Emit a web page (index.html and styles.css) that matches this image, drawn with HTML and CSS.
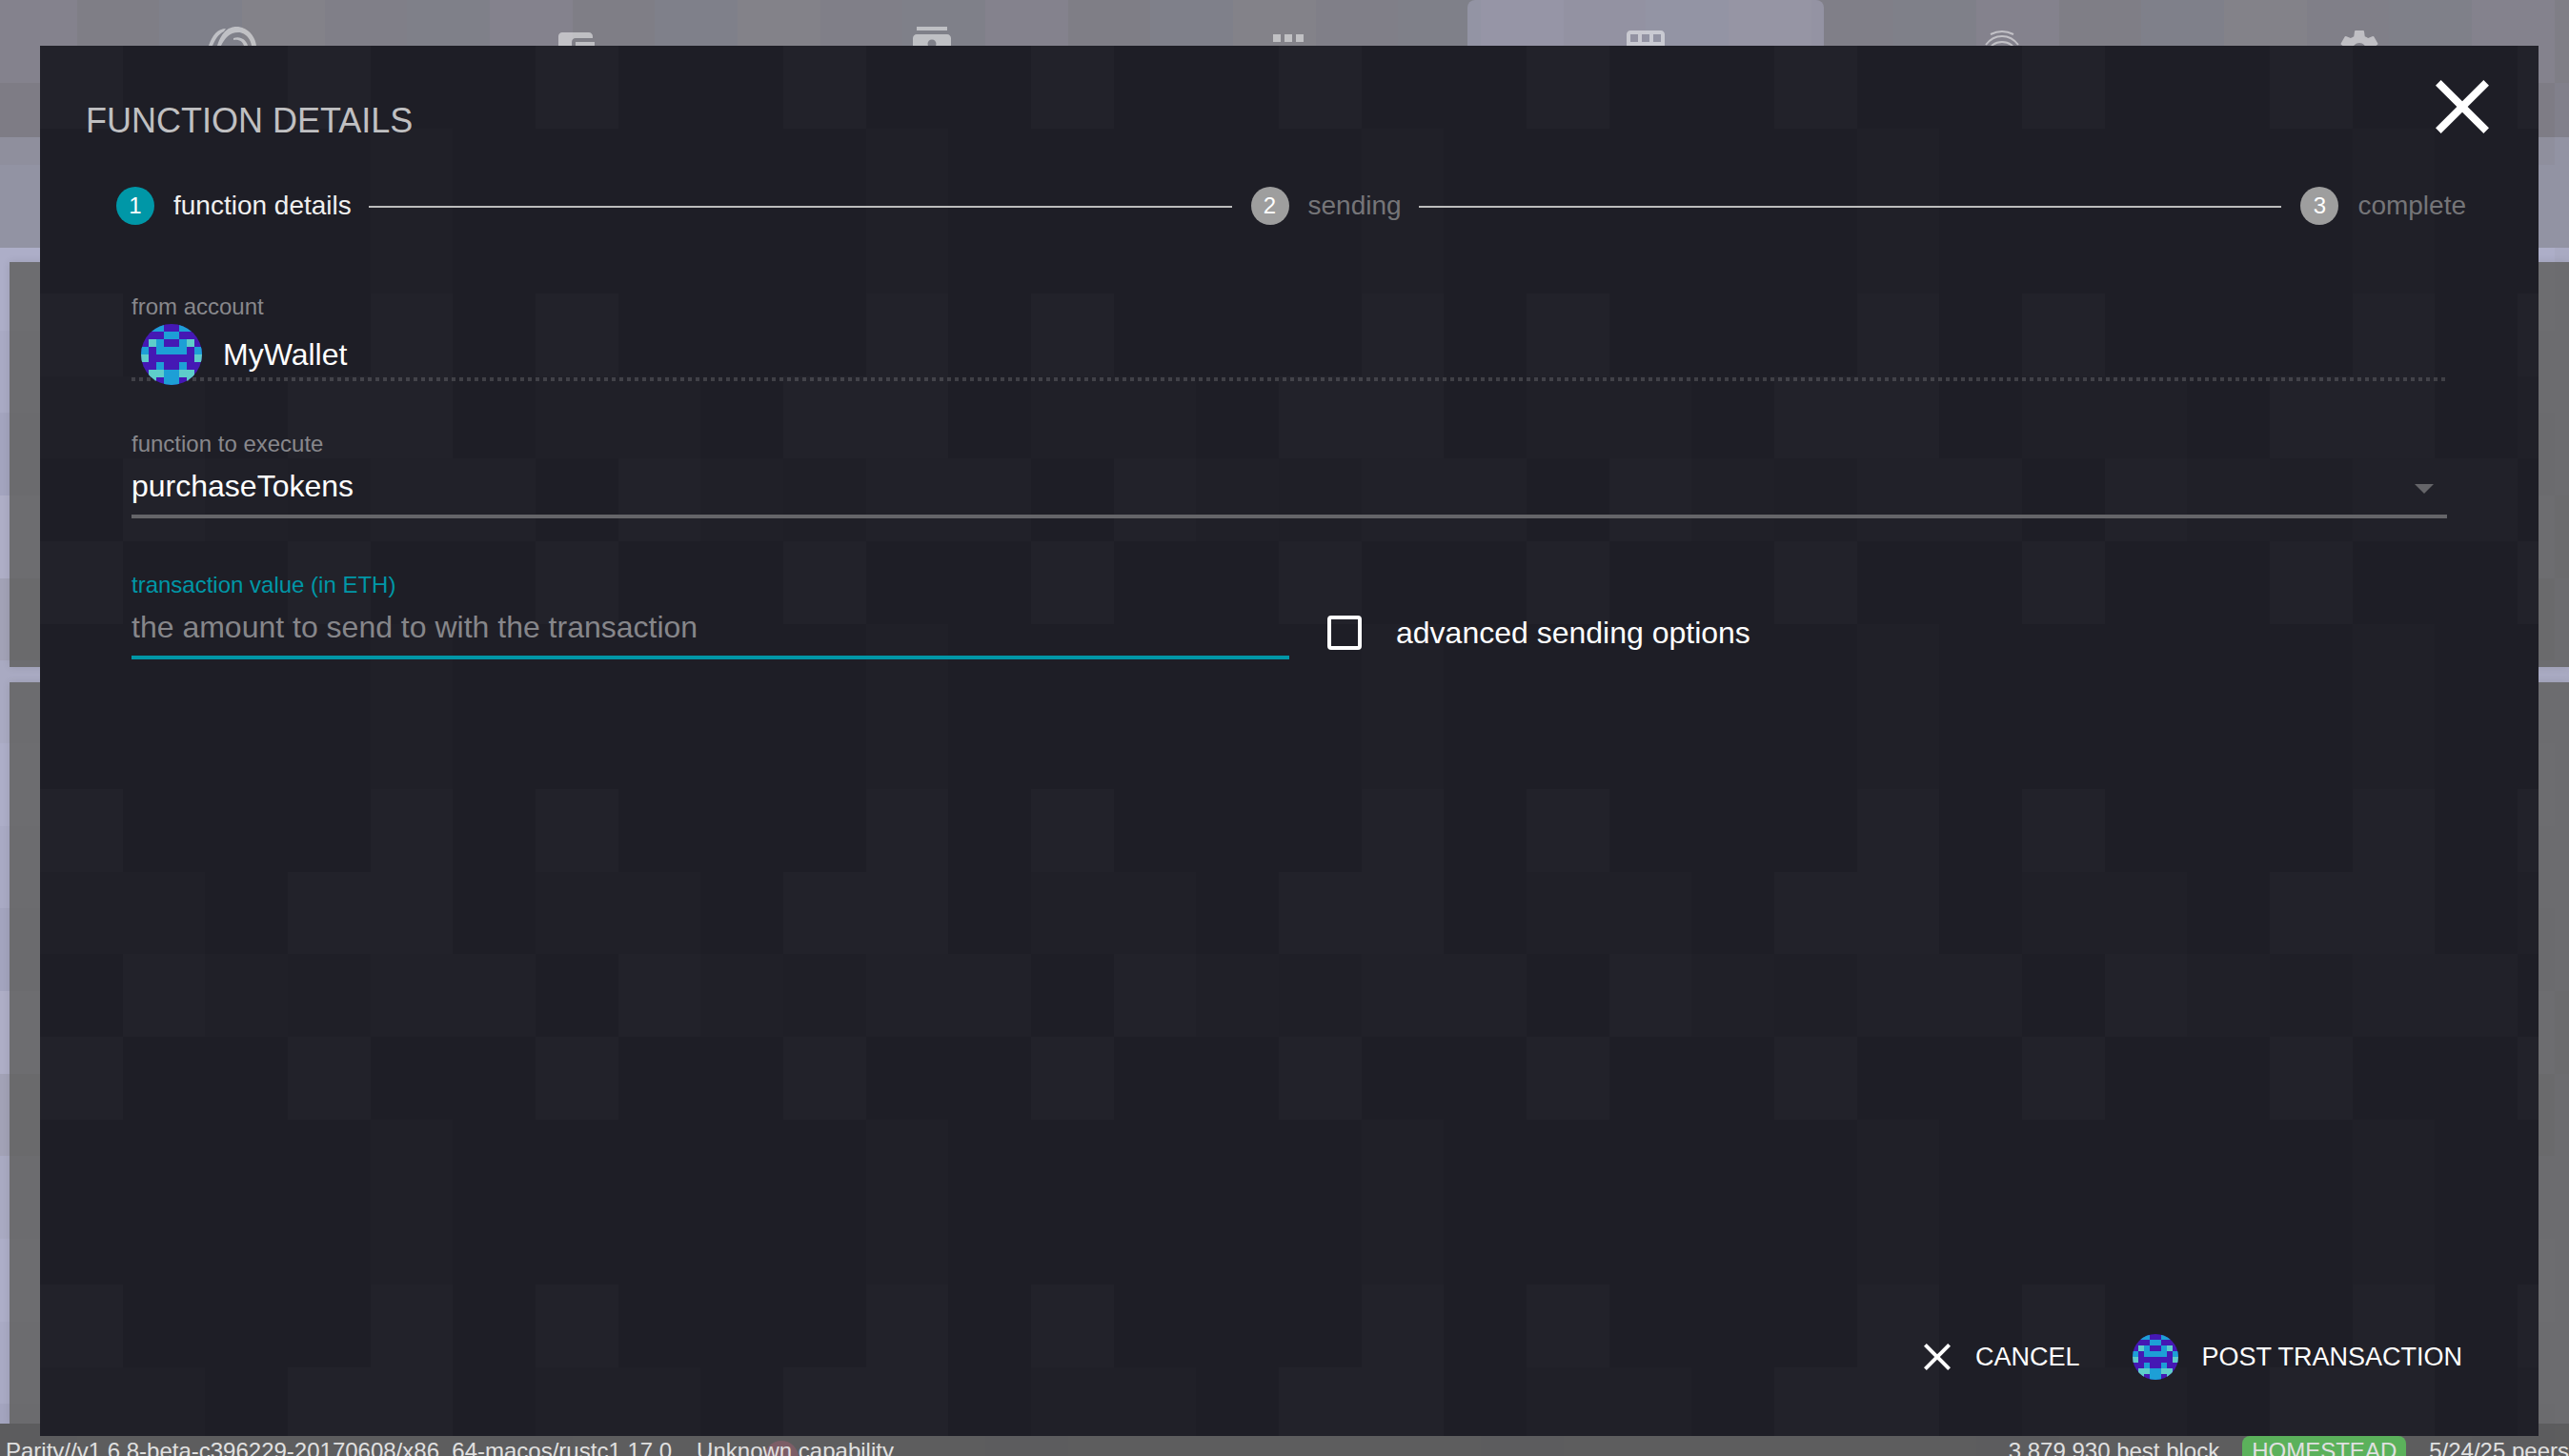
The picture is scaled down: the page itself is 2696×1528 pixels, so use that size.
FILE: index.html
```html
<!DOCTYPE html>
<html lang="en">
<head>
<meta charset="utf-8">
<title>Function details</title>
<link rel="stylesheet" href="styles.css">
</head>
<body>
<svg class="defs" aria-hidden="true">
  <defs>
    <pattern id="page-squares" x="-6" y="0" width="520" height="520" patternUnits="userSpaceOnUse" viewBox="0 0 6 6">
      <g shape-rendering="crispEdges">
        <rect width="6" height="6" fill="#a9aac2"/>
        <rect width="1" height="1" fill="#aeaec6"/>
        <rect x="1" width="1" height="1" fill="#a5a6b8"/>
        <rect x="2" width="1" height="1" fill="#a4abc1"/>
        <rect x="3" width="1" height="1" fill="#adaebf"/>
        <rect x="4" width="1" height="1" fill="#a6a9bc"/>
        <rect x="5" width="1" height="1" fill="#a4aabf"/>
        <rect y="1" width="1" height="1" fill="#a2a2b6"/>
        <rect y="3" width="1" height="1" fill="#adaec8"/>
        <rect y="4" width="1" height="1" fill="#a9aac4"/>
        <rect y="5" width="1" height="1" fill="#a3a4be"/>
      </g>
    </pattern>
    <pattern id="modal-squares" width="520" height="520" patternUnits="userSpaceOnUse" viewBox="0 0 6 6">
      <g shape-rendering="crispEdges">
        <rect width="6" height="6" fill="#1e1e26"/>
        <path fill="#22222a" d="M0 0h1v1H0zM3 0h1v1H3zM0 3h1v1H0zM4 3h1v2H3V4h1zM1 5h1v1H1z"/>
        <path fill="#202028" d="M4 1h1v2H4zM0 4h2v1H0zM2 5h1v1H2z"/>
        <path fill="#212129" d="M4 5h2v1H4z"/>
        <path fill="#1f1f27" d="M3 5h1v1H3z"/>
      </g>
    </pattern>
    <clipPath id="round"><circle cx="4" cy="4" r="4"/></clipPath>
    <symbol id="identicon" viewBox="0 0 8 8">
      <g clip-path="url(#round)" >
        <rect width="8" height="8" fill="#4518b4"/>
        <path fill="#1d9fd6" d="M1 0h2v1H1zM5 0h2v1H5zM3 1h2v1H3zM2 2h1v1h2V2h1v2H2zM0 3h1v1H0zM7 3h1v1H7zM2 5h1v1H2zM5 5h1v1H5zM3 6h2v2H3z"/>
        <path fill="#5ecdca" d="M1 2h1v1H1zM6 2h1v1H6zM0 4h1v1H0zM7 4h1v1H7zM1 6h2v1H2v1H1zM5 6h2v2H6V7H5z"/>
      </g>
    </symbol>
    <symbol id="close" viewBox="0 0 24 24">
      <path d="M19 6.41L17.59 5 12 10.59 6.41 5 5 6.41 10.59 12 5 17.59 6.41 19 12 13.41 17.59 19 19 17.59 13.41 12z"/>
    </symbol>
  </defs>
</svg>

<div class="app">
  <svg class="squares" aria-hidden="true"><rect width="100%" height="100%" fill="url(#page-squares)"/></svg>
  <nav class="tabs" aria-label="Main">
    <a class="tab" href="#home" aria-label="Home"><svg class="tab-icon logo" viewBox="0 0 48 48"><path d="M2 20C6 8 12 2 20 2l-2 3C12 8 9 13 6 20z"/><path d="M11 20C16 4 24 0 31 0c12 0 20 10 21 20h-5C46 12 40 6 33 6 24 6 19 12 15 20z"/><path d="M28 12c8-3 14 3 15 8h-4c-1-4-5-7-11-6z"/></svg></a>
    <a class="tab" href="#accounts" aria-label="Accounts"><svg class="tab-icon" viewBox="0 0 24 24"><path d="M21 18v1c0 1.1-.9 2-2 2H5c-1.11 0-2-.9-2-2V5c0-1.1.89-2 2-2h14c1.1 0 2 .9 2 2v1h-9c-1.11 0-2 .9-2 2v8c0 1.1.89 2 2 2h9zm-9-2h10V8H12v8z"/></svg></a>
    <a class="tab" href="#addresses" aria-label="Addressbook"><svg class="tab-icon" viewBox="0 0 24 24"><path d="M20 0H4v2h16V0zM4 24h16v-2H4v2zM20 4H4c-1.1 0-2 .9-2 2v12c0 1.1.9 2 2 2h16c1.1 0 2-.9 2-2V6c0-1.1-.9-2-2-2zm-8 2.75c1.24 0 2.25 1.01 2.25 2.25s-1.01 2.25-2.25 2.25S9.750 10.240 9.750 9 10.760 6.750 12 6.750zM17 17H7v-1.500c0-1.670 3.330-2.500 5-2.500s5 .83 5 2.500V17z"/></svg></a>
    <a class="tab" href="#apps" aria-label="Applications"><svg class="tab-icon" viewBox="0 0 24 24"><path d="M4 8h4V4H4v4zm6 12h4v-4h-4v4zm-6 0h4v-4H4v4zm0-6h4v-4H4v4zm6 0h4v-4h-4v4zm6-10v4h4V4h-4zm-6 4h4V4h-4v4zm6 6h4v-4h-4v4zm0 6h4v-4h-4v4z"/></svg></a>
    <a class="tab active" href="#contracts" aria-label="Contracts"><svg class="tab-icon" viewBox="0 0 24 24"><path d="M20 2H4c-1.100 0-2 .9-2 2v16c0 1.100.9 2 2 2h16c1.100 0 2-.9 2-2V4c0-1.100-.9-2-2-2zM8 20H4v-4h4v4zm0-6H4v-4h4v4zm0-6H4V4h4v4zm6 12h-4v-4h4v4zm0-6h-4v-4h4v4zm0-6h-4V4h4v4zm6 12h-4v-4h4v4zm0-6h-4v-4h4v4zm0-6h-4V4h4v4z"/></svg></a>
    <a class="tab" href="#signer" aria-label="Signer"><svg class="tab-icon outline" viewBox="0 0 24 24"><path d="M6 4C10 2 14 2 18 4M3.500 9.500C8 3.500 16 3.500 20.500 9.500M5 14C5 6 19 6 19 14M8.500 14c0-4.500 7-4.500 7 0"/></svg></a>
    <a class="tab" href="#settings" aria-label="Settings"><svg class="tab-icon" viewBox="0 0 24 24"><path d="M19.430 12.980c.04-.32.07-.64.07-.98s-.03-.66-.07-.98l2.110-1.650c.19-.15.24-.42.12-.64l-2-3.460c-.12-.22-.39-.3-.61-.22l-2.490 1c-.52-.4-1.080-.73-1.690-.98l-.38-2.650C14.460 2.180 14.250 2 14 2h-4c-.25 0-.46.18-.49.42l-.38 2.650c-.61.25-1.170.59-1.690.98l-2.490-1c-.23-.09-.49 0-.61.22l-2 3.460c-.13.22-.07.49.12.64l2.110 1.650c-.04.32-.07.65-.07.98s.03.66.07.98l-2.110 1.650c-.19.15-.24.42-.12.64l2 3.460c.12.22.39.3.61.22l2.490-1c.52.4 1.080.73 1.690.98l.38 2.650c.03.24.24.42.49.42h4c.25 0 .46-.18.49-.42l.38-2.650c.61-.25 1.170-.59 1.690-.98l2.490 1c.23.09.49 0 .61-.22l2-3.460c.12-.22.07-.49-.12-.64l-2.110-1.650zM12 15.500c-1.930 0-3.500-1.570-3.500-3.500s1.570-3.500 3.500-3.500 3.500 1.570 3.500 3.500-1.570 3.500-3.500 3.500z"/></svg></a>
  </nav>
  <div class="toolbar"></div>
  <main class="cards">
    <section class="card"></section>
    <section class="card tall"></section>
  </main>
  <footer class="status">
    <span class="ghost"></span>
    <span class="version">Parity//v1.6.8-beta-c396229-20170608/x86_64-macos/rustc1.17.0</span>
    <span class="capability">Unknown capability</span>
    <span class="best-block">3,879,930 best block</span>
    <span class="network">HOMESTEAD</span>
    <span>5/24/25 peers</span>
  </footer>
</div>

<div class="modal" role="dialog" aria-labelledby="modal-title">
  <svg class="squares" aria-hidden="true"><rect width="100%" height="100%" fill="url(#modal-squares)"/></svg>
  <header class="modal-header">
    <h1 id="modal-title">FUNCTION DETAILS</h1>
    <button class="close" type="button" aria-label="Close"><svg viewBox="0 0 24 24"><use href="#close"/></svg></button>
  </header>
  <ol class="steps">
    <li class="step current"><span class="number">1</span>function details</li>
    <li class="connector" role="presentation"></li>
    <li class="step"><span class="number">2</span>sending</li>
    <li class="connector" role="presentation"></li>
    <li class="step"><span class="number">3</span>complete</li>
  </ol>
  <form class="form">
    <div class="field">
      <span class="label">from account</span>
      <div class="account"><svg class="avatar" viewBox="0 0 8 8"><use href="#identicon"/></svg>MyWallet</div>
    </div>
    <div class="field">
      <label class="label" for="function">function to execute</label>
      <div class="select-wrap">
        <select class="control" id="function"><option>purchaseTokens</option></select>
        <svg class="arrow" viewBox="0 0 20 10"><path d="M0 0h20L10 10z"/></svg>
      </div>
    </div>
    <div class="columns">
      <div class="field focused">
        <label class="label" for="value">transaction value (in ETH)</label>
        <input class="control" id="value" type="text" placeholder="the amount to send to with the transaction">
      </div>
      <label class="check"><input type="checkbox">advanced sending options</label>
    </div>
  </form>
  <footer class="actions">
    <button class="action" type="button"><svg class="action-icon" viewBox="0 0 24 24"><use href="#close"/></svg>CANCEL</button>
    <button class="action" type="button"><svg class="action-icon" viewBox="0 0 8 8"><use href="#identicon"/></svg>POST TRANSACTION</button>
  </footer>
</div>
</body>
</html>
```
FILE: styles.css
```css
* {
  box-sizing: border-box;
}

body {
  margin: 0;
  height: 100vh;
  overflow: hidden;
  font-family: "Liberation Sans", Arial, sans-serif;
  color: #fff;
}

button,
input,
select {
  margin: 0;
  padding: 0;
  border: 0;
  background: none;
  color: inherit;
  font: inherit;
}

svg {
  display: block;
  fill: currentColor;
}

.defs {
  position: absolute;
  width: 0;
  height: 0;
}

.squares {
  position: absolute;
  inset: 0;
  z-index: -1;
  width: 100%;
  height: 100%;
}

/* Application behind the dialog */
.app {
  position: relative;
  z-index: 0;
  display: flex;
  flex-direction: column;
  height: calc(100vh + 24px);
}

.tabs {
  display: flex;
  height: 144px;
  padding: 0 33px 0 42px;
  background: rgba(89, 86, 84, 0.5);
}

.tab {
  display: flex;
  flex: 1;
  justify-content: center;
  padding-top: 28px;
  color: rgba(255, 255, 255, 0.5);
}

.tab.active {
  border-radius: 8px 8px 0 0;
  background: rgba(190, 190, 220, 0.32);
}

.tab-icon {
  width: 48px;
  height: 48px;
  overflow: visible;
}

.tab-icon.logo {
  margin-left: 24px;
}

.tab-icon.outline {
  fill: none;
  stroke: currentColor;
  stroke-width: 1;
}

.toolbar {
  height: 116px;
  background: rgba(124, 124, 132, 0.5);
}

.cards {
  display: flex;
  flex: 1;
  flex-direction: column;
  gap: 16px;
  padding: 15px 0 0 10px;
}

.card {
  flex: 425;
  background: rgba(92, 92, 90, 0.8);
  box-shadow: 0 0 8px rgba(0, 0, 0, 0.1);
}

.card.tall {
  flex: 778;
}

.status {
  position: relative;
  display: flex;
  align-items: center;
  height: 58px;
  padding-left: 6px;
  background: rgba(88, 88, 88, 0.95);
  color: #e0e0e0;
  font-size: 24px;
  line-height: 32px;
  white-space: nowrap;
}

.ghost {
  position: absolute;
  top: 18px;
  left: 802px;
  width: 36px;
  height: 36px;
  border-radius: 50%;
  background: #7c5d66;
}

.version {
  margin-right: 26px;
}

.capability {
  position: relative;
}

.best-block {
  margin-left: auto;
}

.network {
  margin: 0 24px;
  padding: 0 10px;
  border-radius: 8px;
  background: #5bb15b;
}

/* Dialog */
.modal {
  position: absolute;
  inset: 48px 32px 21px 42px;
  z-index: 1;
  display: flex;
  flex-direction: column;
  padding: 16px 0 59px;
}

.modal-header {
  display: flex;
  align-items: center;
  justify-content: space-between;
  padding: 0 32px 0 48px;
}

h1 {
  margin: 0;
  padding-top: 30px;
  color: #c0c0c2;
  font-size: 36px;
  font-weight: 400;
  line-height: 40px;
}

.close svg {
  width: 96px;
  height: 96px;
}

.steps {
  display: flex;
  align-items: center;
  margin: 36px 76px 0 80px;
  padding: 0;
  list-style: none;
  font-size: 28px;
  line-height: 40px;
}

.step {
  display: flex;
  gap: 20px;
  color: #757578;
}

.step.current {
  color: #f0f0f0;
}

.number {
  width: 40px;
  height: 40px;
  border-radius: 50%;
  background: #9e9e9e;
  color: #fff;
  font-size: 24px;
  text-align: center;
}

.current .number {
  background: #0097a7;
}

.connector {
  flex: 1;
  height: 2px;
  margin: 2px 20px 0 18px;
  background: #bdbdbd;
}

.form {
  display: flex;
  flex-direction: column;
  gap: 52px;
  margin: 72px 96px 0;
}

.label {
  display: block;
  color: #88888c;
  font-size: 24px;
  line-height: 28px;
}

.account {
  display: flex;
  align-items: center;
  gap: 22px;
  height: 64px;
  padding: 12px 0 4px 10px;
  background: repeating-linear-gradient(90deg, rgba(255, 255, 255, 0.15) 0 4px, transparent 4px 8px) left bottom / 100% 4px no-repeat;
  font-size: 32px;
  line-height: 36px;
}

.avatar {
  flex: none;
  width: 64px;
  height: 64px;
}

.control {
  display: block;
  width: 100%;
  height: 64px;
  border-bottom: 4px solid #656569;
  border-radius: 0;
  outline: 0;
  appearance: none;
  font-size: 32px;
}

.select-wrap {
  position: relative;
}

.arrow {
  position: absolute;
  top: 28px;
  right: 14px;
  width: 20px;
  height: 10px;
  color: #656569;
}

.control::placeholder {
  color: #86868a;
  opacity: 1;
}

.focused .label {
  color: #0097a7;
}

.focused .control {
  border-color: #0097a7;
}

.columns {
  display: grid;
  grid-template-columns: 1fr 1fr;
  padding-top: 4px;
}

.check {
  display: flex;
  align-items: center;
  gap: 36px;
  padding: 36px 0 0 40px;
  font-size: 32px;
  line-height: 36px;
}

.check input {
  width: 36px;
  height: 36px;
  border: 4px solid #fff;
  border-radius: 4px;
  appearance: none;
}

.actions {
  display: flex;
  gap: 56px;
  justify-content: flex-end;
  margin: auto 80px 0;
}

.action {
  display: flex;
  align-items: center;
  gap: 24px;
  font-size: 27px;
  line-height: 48px;
}

.action:first-child {
  gap: 16px;
}

.action-icon {
  width: 48px;
  height: 48px;
}
```
